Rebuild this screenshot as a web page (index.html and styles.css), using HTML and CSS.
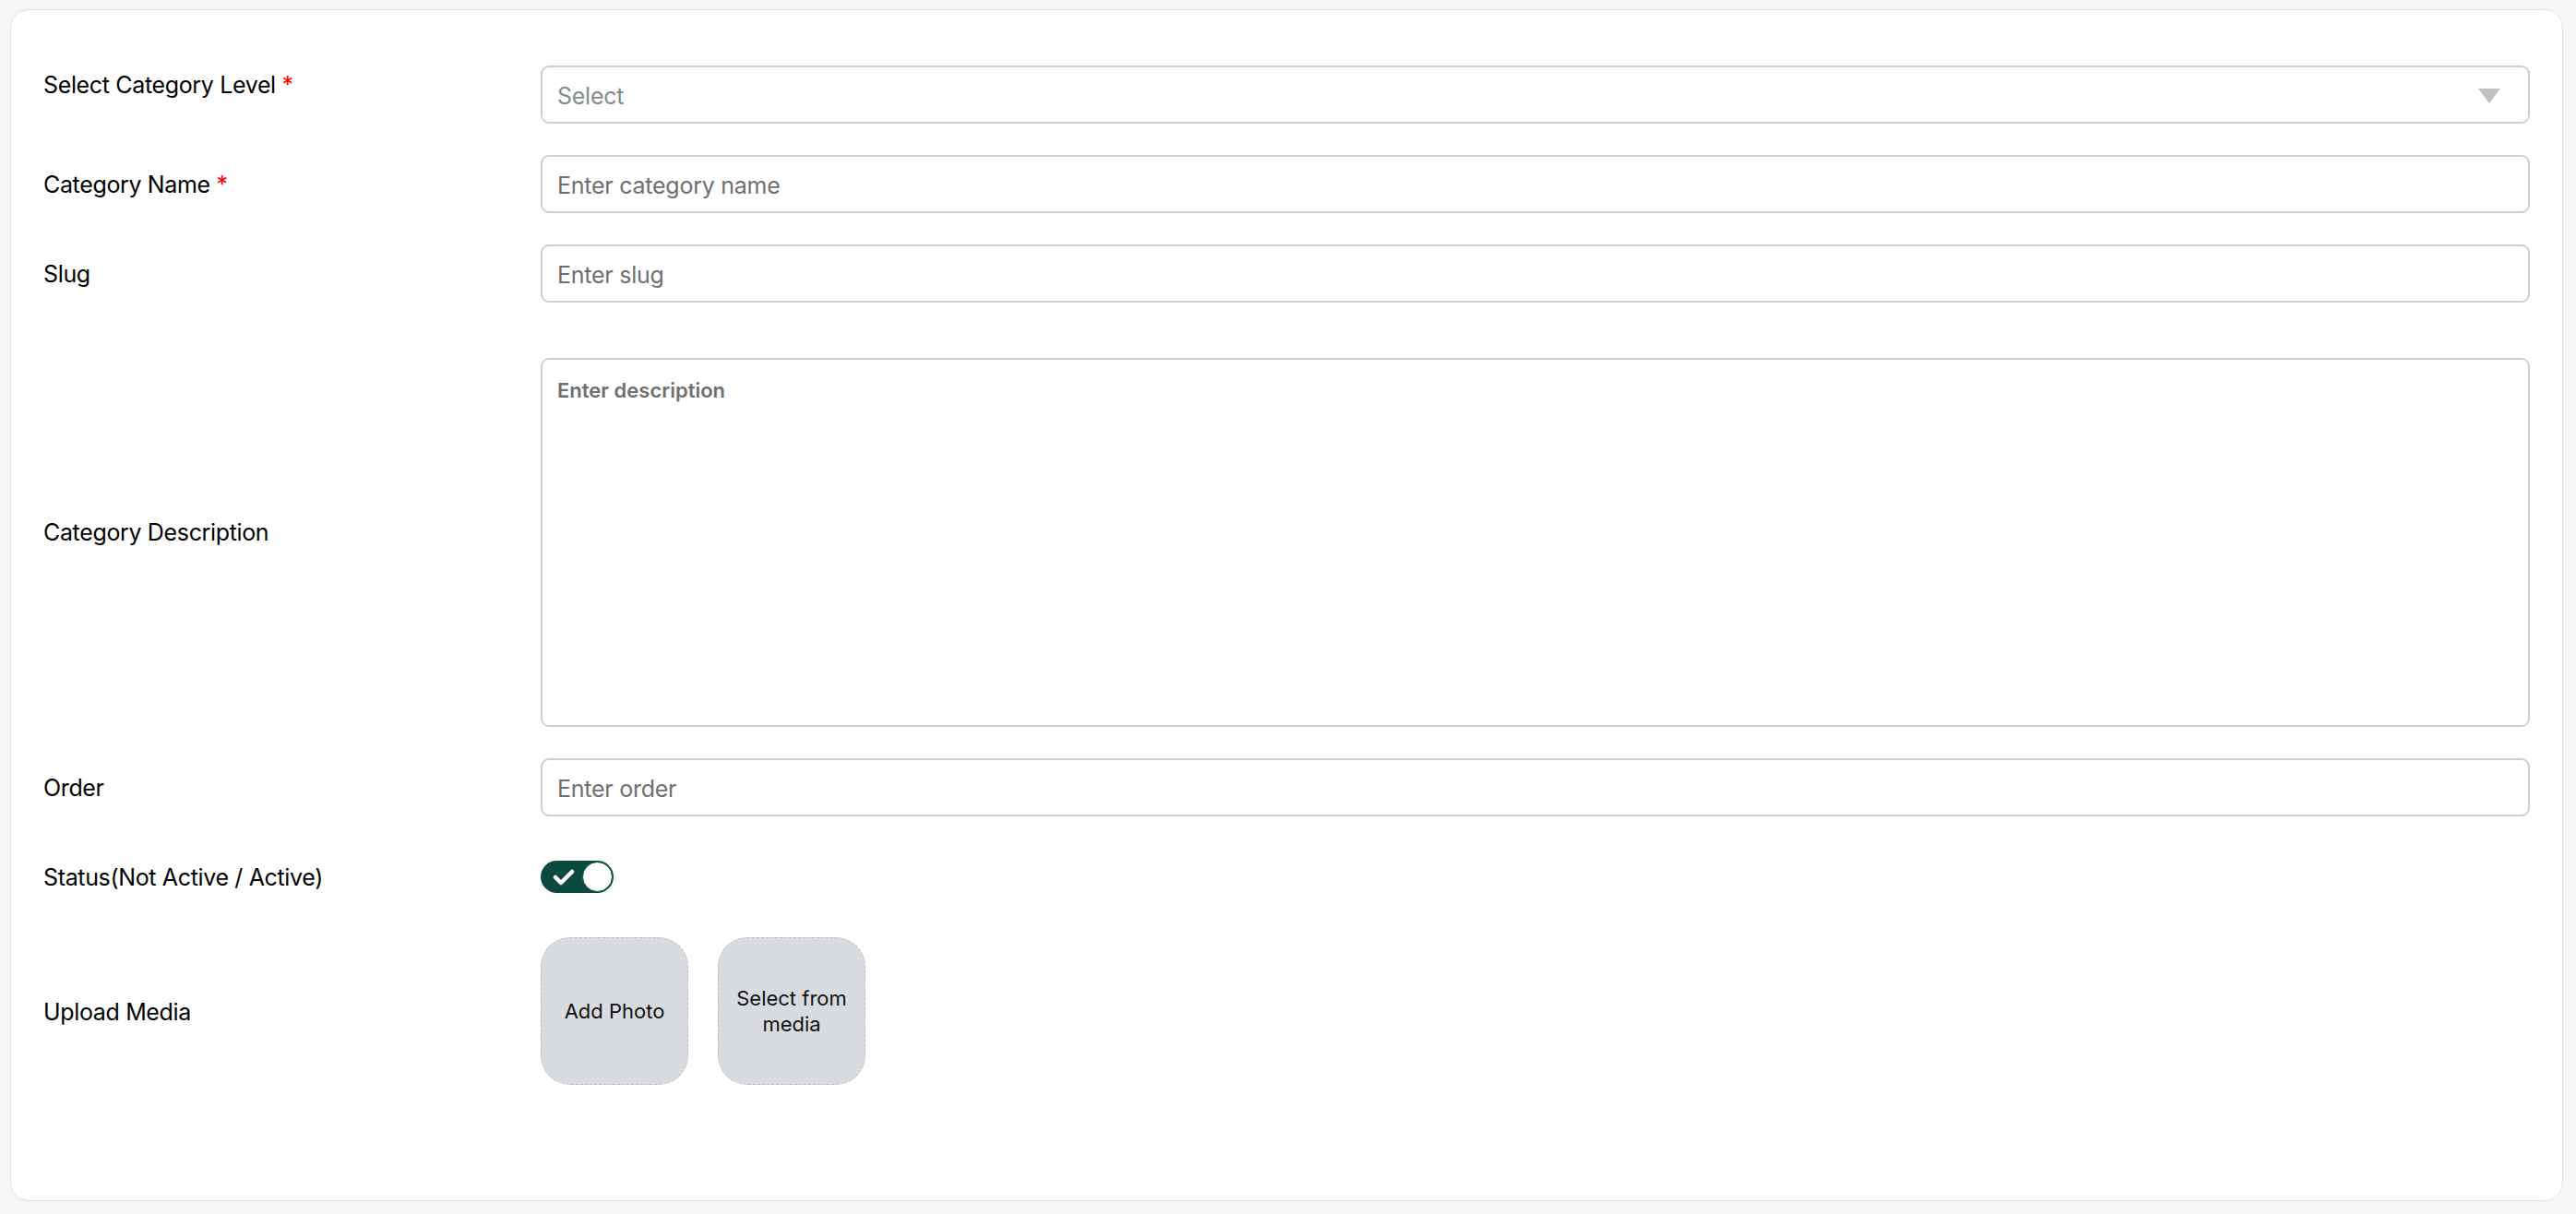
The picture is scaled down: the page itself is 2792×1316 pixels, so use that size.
FILE: index.html
```html
<!DOCTYPE html>
<html lang="en">
<head>
    <meta charset="UTF-8">
    <meta name="viewport" content="width=device-width, initial-scale=1.0">
    <title>Add Category</title>
    <link rel="stylesheet" href="styles.css">
</head>
<body>
    <div class="card">
        <form class="category-form">
            <div class="form-row">
                <label class="form-label label-raised">Select Category Level <span class="req">*</span></label>
                <div class="select-wrap">
                    <select class="form-control form-select">
                        <option>Select</option>
                    </select>
                    <svg class="select-arrow" width="24" height="16" viewBox="0 0 24 16">
                        <path d="M0 0 H24 L12 16 Z" fill="#bfc2c3"/>
                    </svg>
                </div>
            </div>
            <div class="form-row">
                <label class="form-label">Category Name <span class="req">*</span></label>
                <input class="form-control" type="text" placeholder="Enter category name">
            </div>
            <div class="form-row">
                <label class="form-label">Slug</label>
                <input class="form-control" type="text" placeholder="Enter slug">
            </div>
            <div class="form-row row-tall">
                <label class="form-label label-raised">Category Description</label>
                <textarea class="form-control form-textarea" placeholder="Enter description"></textarea>
            </div>
            <div class="form-row">
                <label class="form-label">Order</label>
                <input class="form-control" type="text" placeholder="Enter order">
            </div>
            <div class="form-row row-fixed">
                <label class="form-label">Status(Not Active / Active)</label>
                <div class="toggle">
                    <svg class="toggle-check" width="24" height="18" viewBox="0 0 24 18">
                        <path d="M3 9 L9 15 L21 3" fill="none" stroke="#fff" stroke-width="4.5" stroke-linecap="round" stroke-linejoin="round"/>
                    </svg>
                    <span class="toggle-knob"></span>
                </div>
            </div>
            <div class="form-row">
                <label class="form-label">Upload Media</label>
                <div class="media-buttons">
                    <button type="button" class="media-btn">Add Photo</button>
                    <button type="button" class="media-btn">Select from<br>media</button>
                </div>
            </div>
        </form>
    </div>
</body>
</html>
```

FILE: styles.css
```css
body {
    margin: 0;
    padding: 10px 14px 13px 11px;
    background: #f5f7f7;
    font-family: 'Inter', 'Noto Sans', sans-serif;
    color: #000;
}

.card {
    background: #fff;
    border: 1px solid #dfe3e3;
    border-radius: 20px;
    padding: 60px 35px 125px 35px;
}

.category-form {
    display: flex;
    flex-direction: column;
    gap: 34px;
}

.form-row {
    display: grid;
    grid-template-columns: 539px 1fr;
    align-items: center;
}

.row-tall {
    margin-top: 26px;
}

.row-fixed {
    min-height: 63px;
}

.form-label {
    font-size: 25px;
    line-height: 34px;
    letter-spacing: -0.35px;
    padding-top: 1px;
}

.label-raised {
    margin-bottom: 23px;
}

.req {
    color: #ff0000;
}

/* inputs */
.form-control {
    box-sizing: border-box;
    width: 100%;
    height: 63px;
    border: 2px solid #cfcfcf;
    border-radius: 9px;
    padding: 2px 16px 0;
    font-family: 'Inter', 'Noto Sans', sans-serif;
    font-size: 25px;
    letter-spacing: -0.25px;
    color: #222;
    background: #fff;
    outline: none;
}

.form-control::placeholder {
    color: #6f6f6f;
}

.select-wrap {
    position: relative;
}

.form-select {
    appearance: none;
    -webkit-appearance: none;
    color: #848c89;
}

.select-arrow {
    position: absolute;
    right: 32px;
    top: 25px;
}

.form-textarea {
    height: 400px;
    padding: 20px 16px;
    resize: none;
    font-size: 22px;
    font-weight: 600;
    letter-spacing: 0;
}

/* status toggle */
.toggle {
    width: 79px;
    height: 35px;
    background: #0c4a3e;
    border-radius: 18px;
    display: flex;
    align-items: center;
    justify-content: space-between;
    padding: 0 1px 0 13px;
    box-sizing: border-box;
}

.toggle-knob {
    width: 31px;
    height: 31px;
    border-radius: 50%;
    background: #fff;
    border: 1px solid #0c4a3e;
}

/* media buttons */
.media-buttons {
    display: flex;
    gap: 32px;
}

.media-btn {
    width: 160px;
    height: 160px;
    background: #d8dce0;
    border: 1.5px dashed #bcc0c4;
    border-radius: 32px;
    font-family: 'Inter', 'Noto Sans', sans-serif;
    font-size: 22px;
    line-height: 28px;
    color: #111;
    padding: 0;
    cursor: pointer;
}
```
